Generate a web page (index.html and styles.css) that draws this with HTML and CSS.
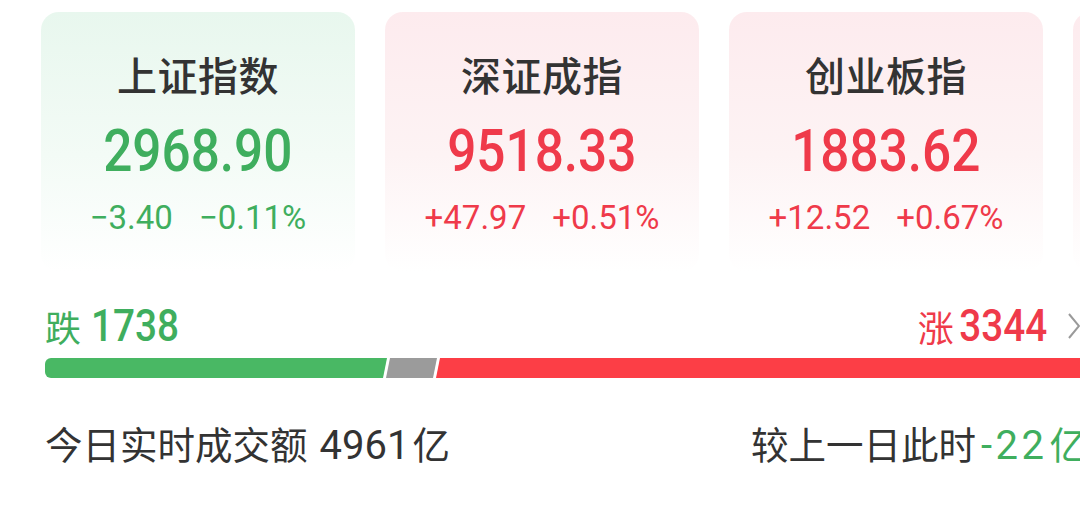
FILE: index.html
```html
<!DOCTYPE html>
<html lang="zh-CN">
<head>
<meta charset="utf-8">
<title>指数</title>
<link rel="stylesheet" href="styles.css">
</head>
<body>
<div class="screen">
  <div class="cards">
    <div class="card card-down">
      <div class="card-title">上证指数</div>
      <div class="card-value down"><span class="num-big">2968.90</span></div>
      <div class="card-change down"><span>−3.40</span><span>−0.11%</span></div>
    </div>
    <div class="card card-up">
      <div class="card-title">深证成指</div>
      <div class="card-value up"><span class="num-big">9518.33</span></div>
      <div class="card-change up"><span>+47.97</span><span>+0.51%</span></div>
    </div>
    <div class="card card-up">
      <div class="card-title">创业板指</div>
      <div class="card-value up"><span class="num-big">1883.62</span></div>
      <div class="card-change up"><span>+12.52</span><span>+0.67%</span></div>
    </div>
    <div class="card card-up"></div>
  </div>

  <div class="summary">
    <div class="counts">
      <div class="count down"><span class="count-label">跌</span><span class="count-num count-num-left">1738</span></div>
      <div class="count up"><span class="count-label">涨</span><span class="count-num count-num-right">3344</span>
        <svg class="chev" width="14" height="28" viewBox="0 0 14 28"><polyline points="2,2 12,14 2,26" fill="none" stroke="#9a9a9a" stroke-width="2"/></svg>
      </div>
    </div>
    <div class="bar">
      <div class="seg seg-green" style="width:342px"></div>
      <div class="seg seg-gray" style="width:51px"></div>
      <div class="seg seg-red"></div>
    </div>
    <div class="turnover">
      <div class="turn-left">今日实时成交额<span class="digits digits-amt">4961</span>亿</div>
      <div class="turn-right">较上一日此时<span class="digits digits-diff green">-22</span><span class="green">亿</span></div>
    </div>
  </div>
</div>
</body>
</html>
```
FILE: styles.css
```css
* { box-sizing: border-box; }
html, body { margin: 0; padding: 0; background: #fff; }
.screen {
  width: 1080px;
  height: 507px;
  overflow: hidden;
  position: relative;
  font-family: "Noto Sans CJK SC", "Noto Sans", sans-serif;
  color: #333;
}
.cards {
  display: flex;
  gap: 30px;
  padding: 12px 0 0 41px;
  width: 1500px;
}
.card {
  flex: 0 0 314px;
  height: 260px;
  border-radius: 18px;
  display: flex;
  flex-direction: column;
  align-items: center;
  padding-top: 38px;
}
.card-down { background: linear-gradient(180deg, #e8f7ee 0%, #f3fbf6 55%, #ffffff 100%); }
.card-up { background: linear-gradient(180deg, #fdebee 0%, #fdf3f4 55%, #ffffff 100%); }
.card-title {
  font-size: 40px;
  line-height: 48px;
  font-weight: 500;
  color: #333;
  letter-spacing: 0.5px;
}
.card-value {
  margin-top: 18px;
  height: 70px;
  line-height: 70px;
  font-family: Roboto, "Noto Sans", sans-serif;
  font-weight: 500;
  font-size: 59px;
}
.num-big {
  display: inline-block;
  transform: scaleX(0.87);
  transform-origin: center;
}
.card-change {
  margin-top: 14px;
  display: flex;
  gap: 26px;
  font-family: Roboto, "Noto Sans", sans-serif;
  font-size: 33px;
  line-height: 36px;
}
.up { color: #ef3a4a; }
.down { color: #3fae5e; }
.green { color: #3fae5e; }

.summary {
  margin-left: 45px;
  width: 1040px;
}
.counts {
  margin-top: 32px;
  display: flex;
  justify-content: space-between;
  align-items: center;
  height: 44px;
}
.count {
  display: flex;
  align-items: center;
  height: 44px;
}
.count-label {
  font-size: 36px;
  line-height: 44px;
}
.count-num {
  display: inline-block;
  font-family: Roboto, "Noto Sans", sans-serif;
  font-weight: 500;
  font-size: 45px;
  line-height: 44px;
  transform: scaleX(0.86);
}
.count-num-left { transform-origin: left center; margin-left: 10px; }
.count-num-right { transform-origin: right center; margin-left: -9px; }
.chev { margin-left: 20px; margin-right: 4px; }

.bar {
  margin-top: 10px;
  height: 20px;
  display: flex;
  width: 1060px;
}
.seg { height: 20px; }
.seg-green {
  background: #49b864;
  border-radius: 6px 0 0 6px;
  clip-path: polygon(0 0, 100% 0, calc(100% - 4px) 100%, 0 100%);
}
.seg-gray {
  background: #9b9b9b;
  margin-left: -1px;
  clip-path: polygon(4px 0, 100% 0, calc(100% - 4px) 100%, 0 100%);
}
.seg-red {
  flex: 1;
  background: #fc3e46;
  margin-left: -1px;
  clip-path: polygon(4px 0, 100% 0, 100% 100%, 0 100%);
}

.turnover {
  margin-top: 43px;
  display: flex;
  justify-content: space-between;
  font-size: 37.5px;
  line-height: 44px;
  color: #333;
}
.turn-left { white-space: nowrap; }
.turn-right { margin-right: -2px; white-space: nowrap; }
.digits {
  font-family: Roboto, "Noto Sans", sans-serif;
  font-size: 40px;
}
.digits-amt { margin: 0 3px 0 12px; }
.digits-diff { margin: 0 2px 0 5px; letter-spacing: 3.5px; }
```
